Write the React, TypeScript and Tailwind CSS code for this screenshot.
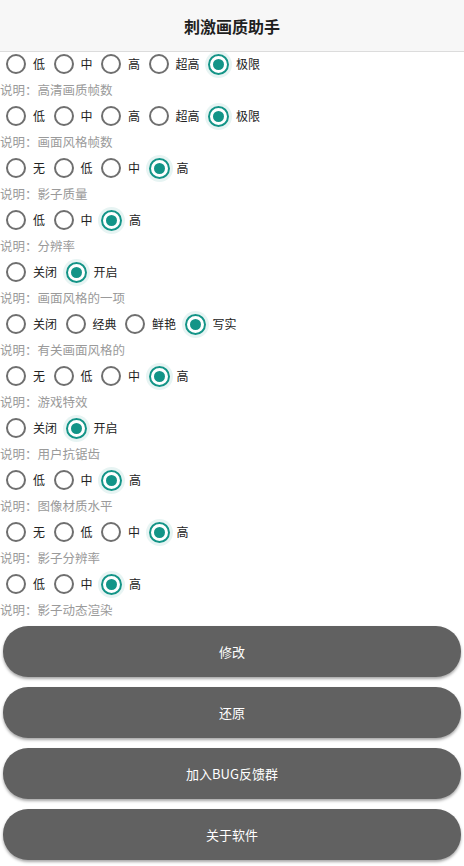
import React, { useState } from "react";

type Row = { options: string[]; selected: number; desc: string };

const initialRows: Row[] = [
  { options: ["低", "中", "高", "超高", "极限"], selected: 4, desc: "说明：高清画质帧数" },
  { options: ["低", "中", "高", "超高", "极限"], selected: 4, desc: "说明：画面风格帧数" },
  { options: ["无", "低", "中", "高"], selected: 3, desc: "说明：影子质量" },
  { options: ["低", "中", "高"], selected: 2, desc: "说明：分辨率" },
  { options: ["关闭", "开启"], selected: 1, desc: "说明：画面风格的一项" },
  { options: ["关闭", "经典", "鲜艳", "写实"], selected: 3, desc: "说明：有关画面风格的" },
  { options: ["无", "低", "中", "高"], selected: 3, desc: "说明：游戏特效" },
  { options: ["关闭", "开启"], selected: 1, desc: "说明：用户抗锯齿" },
  { options: ["低", "中", "高"], selected: 2, desc: "说明：图像材质水平" },
  { options: ["无", "低", "中", "高"], selected: 3, desc: "说明：影子分辨率" },
  { options: ["低", "中", "高"], selected: 2, desc: "说明：影子动态渲染" },
];

function Radio({ label, checked, onClick }: { label: string; checked: boolean; onClick: () => void }) {
  return (
    <button type="button" onClick={onClick} className="flex items-center h-full mr-[2.5px]">
      {checked ? (
        <span className="ml-[6px] w-[21px] h-[21px] rounded-full border-2 border-[#139487] flex items-center justify-center shadow-[0_0_0_3px_rgba(19,148,135,0.10)]">
          <span className="w-[11px] h-[11px] rounded-full bg-[#139487]" />
        </span>
      ) : (
        <span className="ml-[6px] w-[20px] h-[20px] rounded-full border-2 border-[#6f6f6f]" />
      )}
      <span className="ml-[7px] text-[12px] leading-none text-[#222222]">{label}</span>
    </button>
  );
}

export default function App() {
  const [rows, setRows] = useState(initialRows);
  const select = (ri: number, oi: number) =>
    setRows((r) => r.map((row, i) => (i === ri ? { ...row, selected: oi } : row)));

  return (
    <div
      className="w-[464px] h-[866px] bg-white flex flex-col overflow-hidden"
      style={{ fontFamily: '"Noto Sans CJK SC", "Noto Sans", sans-serif' }}
    >
      <div className="h-[52px] shrink-0 bg-[#f7f7f7] border-b border-[#dcdcdc] flex items-center justify-center">
        <span className="text-[16px] font-bold text-[#1f1f1f]">刺激画质助手</span>
      </div>
      <div className="flex flex-col">
        {rows.map((row, ri) => (
          <div key={ri} className="flex flex-col">
            <div className="h-[24px] flex items-center">
              {row.options.map((o, oi) => (
                <Radio key={oi} label={o} checked={row.selected === oi} onClick={() => select(ri, oi)} />
              ))}
            </div>
            <div className="h-[28px] flex items-center text-[12.5px] text-[#9a9a9a]">{row.desc}</div>
          </div>
        ))}
      </div>
      <div className="flex flex-col gap-[10px] px-[3px] pt-[2px]">
        {["修改", "还原", "加入BUG反馈群", "关于软件"].map((t) => (
          <button
            key={t}
            type="button"
            className="h-[51px] w-full rounded-[25px] bg-[#616161] text-white text-[13px] shadow-[0_2px_3px_rgba(0,0,0,0.35)] flex items-center justify-center"
          >
            {t}
          </button>
        ))}
      </div>
    </div>
  );
}
